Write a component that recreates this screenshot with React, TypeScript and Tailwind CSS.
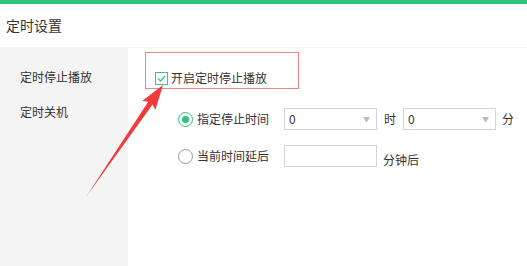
import React from "react";

const font = { fontFamily: '"Noto Sans CJK SC", "Noto Sans", sans-serif' };

function Radio({ checked }: { checked?: boolean }) {
  return checked ? (
    <span className="flex h-[15px] w-[15px] items-center justify-center rounded-full border-[1.5px] border-[#2ec27a]">
      <span className="h-[7px] w-[7px] rounded-full bg-[#2ec27a]" />
    </span>
  ) : (
    <span className="h-[15px] w-[15px] rounded-full border-[1.5px] border-[#9a9a9a]" />
  );
}

function Select({ value }: { value: string }) {
  return (
    <div className="flex h-[22px] w-[93px] items-center justify-between border border-[#d4d4d4] bg-white pl-[4px] pr-[6px] text-[12px] text-[#333]">
      <span>{value}</span>
      <span className="text-[7px] text-[#bbb]">▼</span>
    </div>
  );
}

export default function App() {
  return (
    <div className="relative h-[266px] w-[527px] overflow-hidden bg-white text-[#333]" style={font}>
      {/* green top bar */}
      <div className="h-[4px] bg-[#2ec27a]" />

      {/* header */}
      <div className="flex h-[43px] items-center pl-[6px] text-[14px] text-[#333]">定时设置</div>
      <div className="h-[1px] bg-[#f4f4f4]" />

      {/* body */}
      <div className="flex h-[218px]">
        <div className="flex w-[128px] flex-col gap-[18px] bg-[#f4f4f4] pl-[20px] pt-[20px] text-[12px] leading-[17px]">
          <span>定时停止播放</span>
          <span>定时关机</span>
        </div>

        <div className="flex flex-1 flex-col pt-[23px] text-[12px]">
          <div className="flex items-center gap-[3px] pl-[27px]">
            <span className="flex h-[13px] w-[13px] items-center justify-center border border-[#3cc08a] bg-white">
              <svg width="9" height="7" viewBox="0 0 9 7" fill="none">
                <path d="M1 3.5 L3.5 6 L8 1" stroke="#3cc08a" strokeWidth="1.3" />
              </svg>
            </span>
            <span className="leading-[14px]">开启定时停止播放</span>
          </div>

          <div className="mt-[23px] flex items-center pl-[50px]">
            <span className="flex w-[106px] items-center gap-[4px]">
              <Radio checked />
              <span>指定停止时间</span>
            </span>
            <Select value="0" />
            <span className="px-[7px]">时</span>
            <Select value="0" />
            <span className="pl-[6px]">分</span>
          </div>

          <div className="mt-[13px] flex items-center pl-[50px]">
            <span className="flex w-[106px] items-center gap-[4px]">
              <Radio />
              <span>当前时间延后</span>
            </span>
            <div className="h-[22px] w-[93px] border border-[#d4d4d4] bg-white" />
            <span className="mt-[8px] pl-[6px]">分钟后</span>
          </div>
        </div>
      </div>

      {/* annotation: red box */}
      <div className="pointer-events-none absolute left-[145px] top-[52px] h-[37px] w-[154px] border-[1.5px] border-[#f08585]" />

      {/* annotation: red arrow */}
      <svg className="pointer-events-none absolute left-0 top-0" width="527" height="266" viewBox="0 0 527 266">
        <polygon
          points="86,197 148.2,101.8 142.2,101.1 163,85 155.4,110.1 152.6,104.6"
          fill="#f23a3a"
        />
      </svg>
    </div>
  );
}
